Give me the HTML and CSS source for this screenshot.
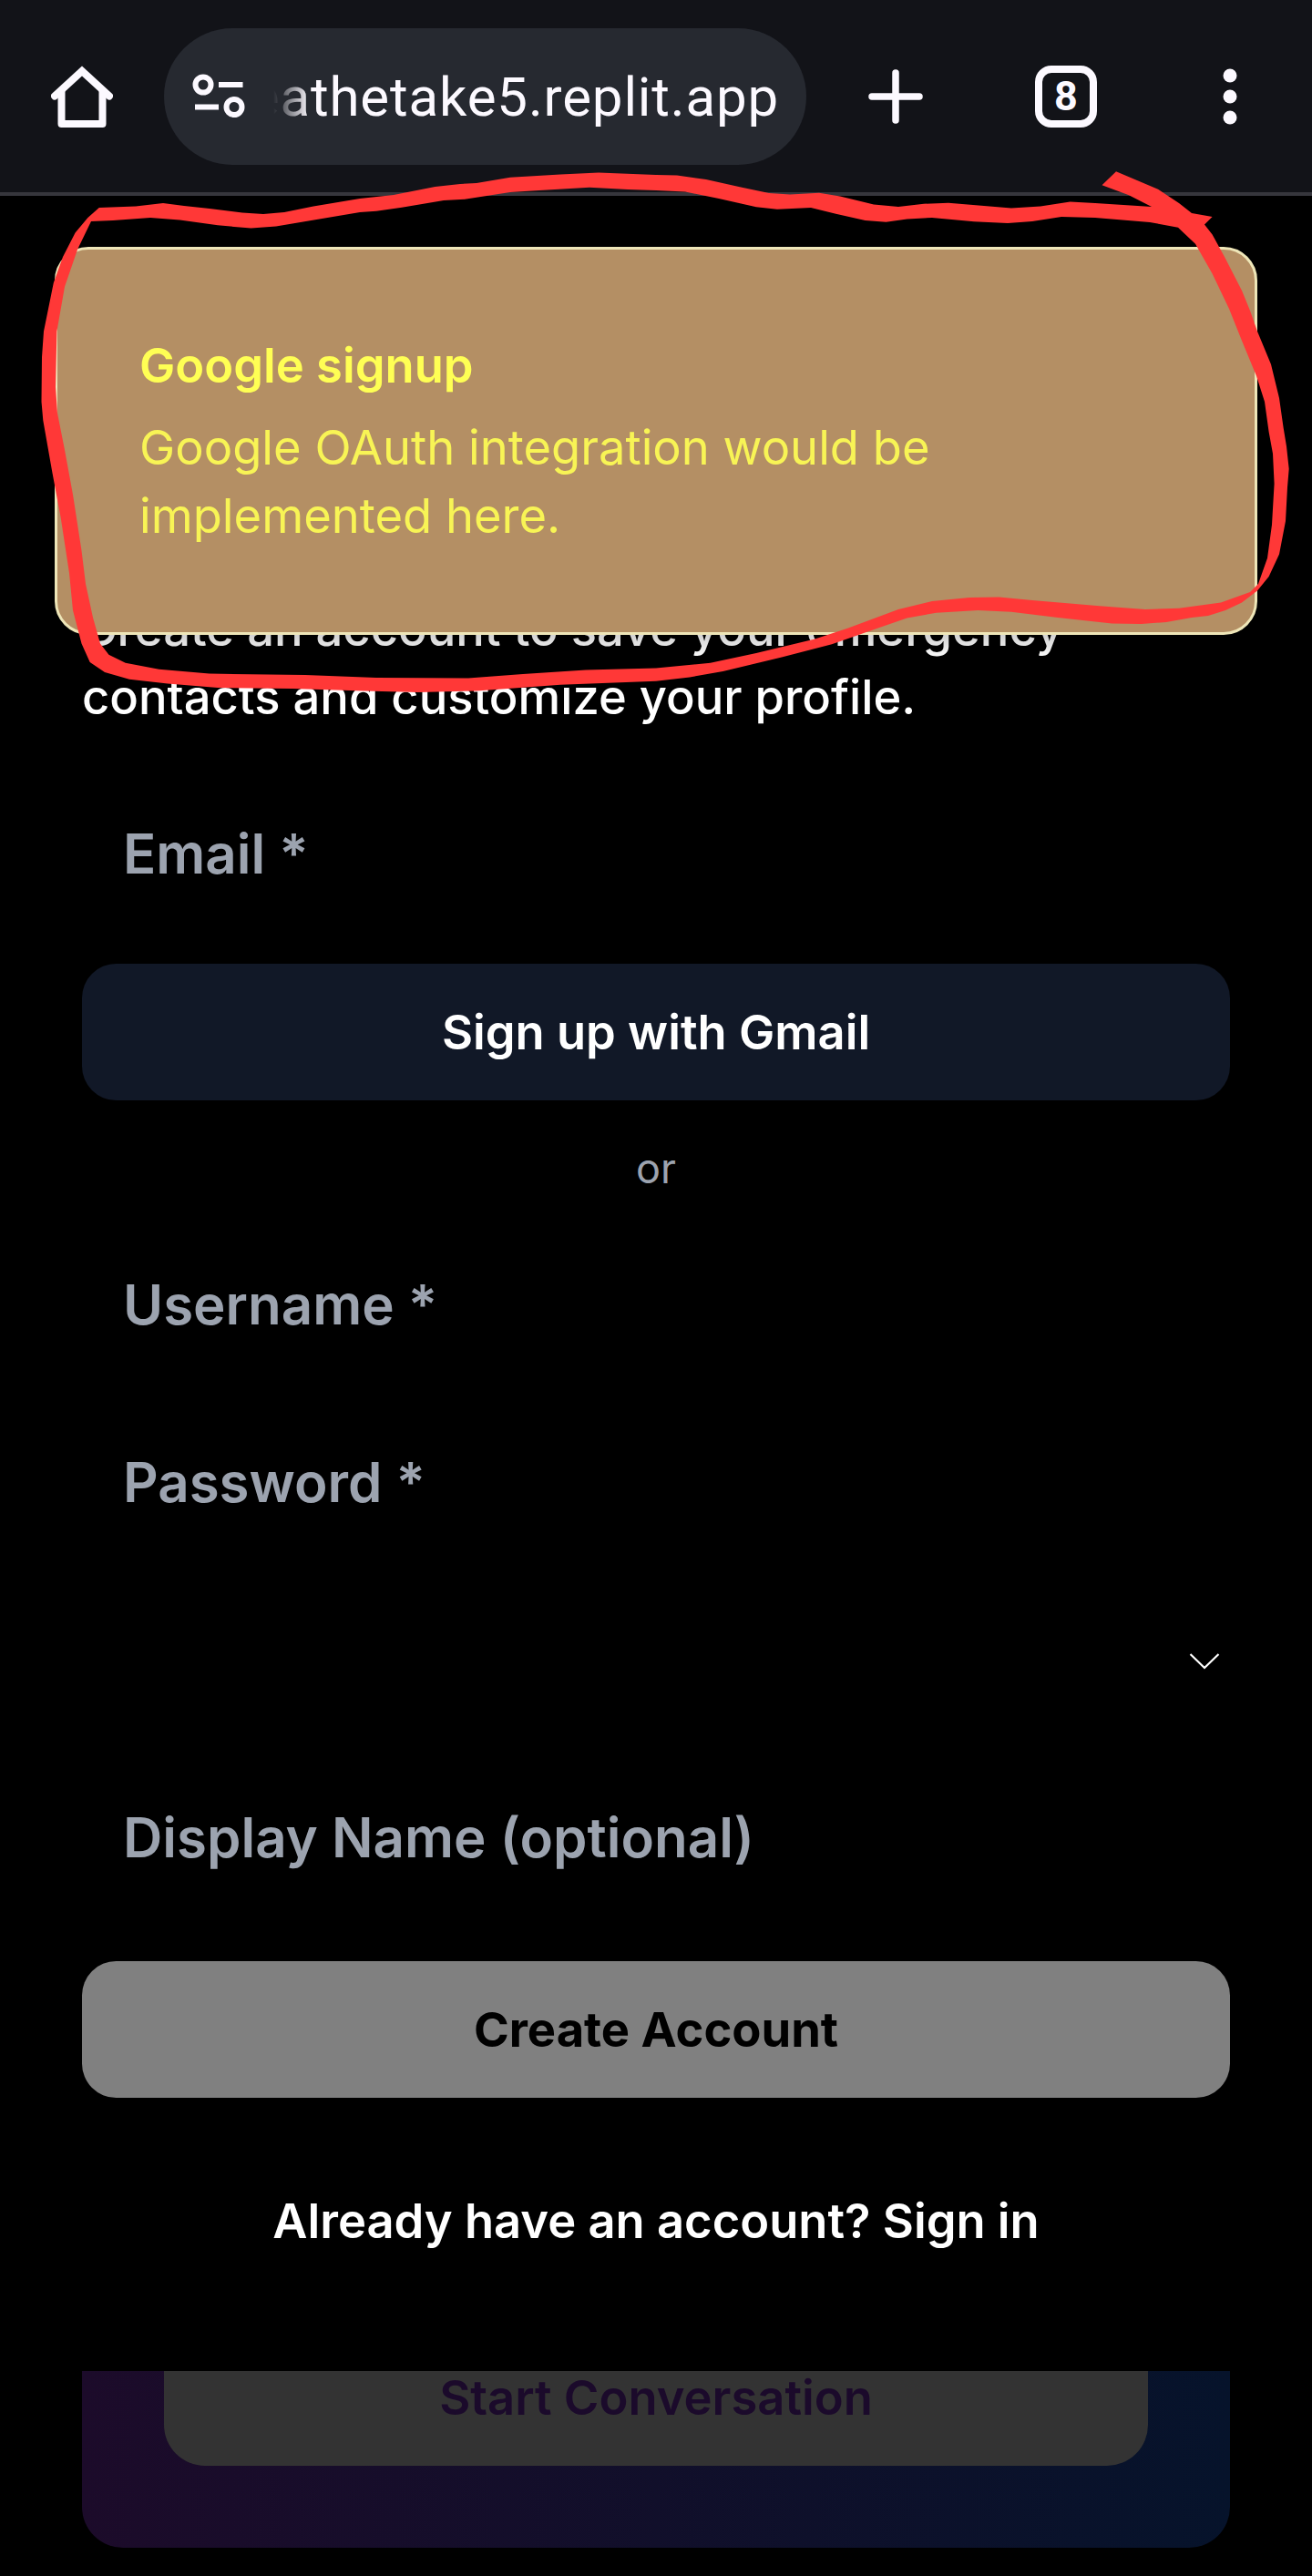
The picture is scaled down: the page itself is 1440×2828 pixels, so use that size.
FILE: index.html
```html
<!DOCTYPE html>
<html lang="en">
<head>
<meta charset="utf-8">
<title>Sign up</title>
<link rel="stylesheet" href="styles.css">
</head>
<body>
<div class="screen">
  <header class="toolbar">
    <svg class="icon-home" viewBox="0 0 68 68" fill="none" stroke="currentColor" stroke-width="8" stroke-linecap="round" stroke-linejoin="round"><path stroke-linejoin="miter" d="M4 33.500 34 6 64 33.500"/><path d="M11.500 28V64H56.500V28"/></svg>
    <div class="omnibox">
      <svg class="icon-tune" viewBox="0 0 58 40" fill="none" stroke="currentColor" stroke-width="6"><circle cx="11" cy="12" r="8.500"/><path d="M28 12H54.500M2 36.500H28"/><circle cx="45" cy="36.500" r="8.500"/></svg>
      <div class="url"><span>eathetake5.replit.app</span></div>
    </div>
    <svg class="icon-plus" viewBox="0 0 60 60" stroke="currentColor" stroke-width="7.500" stroke-linecap="round"><path d="M30 4V56M4 30H56"/></svg>
    <div class="tabs">8</div>
    <svg class="icon-more" viewBox="0 0 16 62" fill="currentColor"><circle cx="8" cy="8" r="7.500"/><circle cx="8" cy="31" r="7.500"/><circle cx="8" cy="54" r="7.500"/></svg>
  </header>

  <main class="form">
    <p class="intro">Create an account to save your emergency contacts and customize your profile.</p>
    <div class="field">Email *</div>
    <button class="btn btn-gmail">Sign up with Gmail</button>
    <div class="divider">or</div>
    <div class="fields">
      <div class="field">Username *</div>
      <div class="field">Password *</div>
      <div class="field select"><svg class="icon-chevron" viewBox="0 0 34 20" fill="none" stroke="currentColor" stroke-width="2.200"><path d="M1.500 2 17 17 32.500 2"/></svg></div>
      <div class="field">Display Name (optional)</div>
    </div>
    <button class="btn btn-create">Create Account</button>
    <button class="btn btn-signin">Already have an account? Sign in</button>
    <section class="card">
      <div class="card-action">Start Conversation</div>
    </section>
  </main>

  <div class="toast">
    <div class="toast-title">Google signup</div>
    <div class="toast-text">Google OAuth integration would be implemented here.</div>
  </div>

  <!-- hand-drawn marker loop around the toast -->
  <svg class="marker" viewBox="0 0 1440 800"><path fill="#ff3837" fill-rule="evenodd" d="M108.800 228L149 226.500L179 223L202 226L230 229L266 233.500L289 235L312 233L344 226.500L395 218L432 214L477.500 205L505 202L523 201L560 194.700L615 191.400L657 189.400L720 192L743 192.600L775 197L812 205.300L844 212L867 213.500L899 211.800L922 215.500L959 224.500L986 227L1014 223.700L1041 222.800L1110 228.600L1142 226.500L1174.500 221.600L1202 223L1264 227L1239 214.300L1209.500 203.300L1225 188.200L1248 198L1271 207.800L1294 223L1308 234L1330.600 238L1322 246.500L1330.600 257.500L1344 282L1363 319L1372 341L1380 363.700L1395 400L1404 437L1408.700 470L1412 490L1414.700 514.700L1413 535L1411 572L1404 608.600L1392.600 633L1380 648.600L1363 661.600L1345 670L1326 676L1308 678L1280 683L1252.600 685L1220.500 684.500L1161 678L1110 671.800L1073.500 670L1027.600 672.700L995.500 678.400L963 689.800L913 707.300L858 721.600L793.500 737L757 743.500L720 747.800L615 751.800L523 758.400L459 760L399.400 758.400L321.400 756L239 755L184 750.600L142 745.700L115 738L98.700 727L89.500 706.500L80 670L76 629L66.600 567.800L57.400 518.800L47.300 461.600L45.500 441L46 392L48 363.700L58.800 310.600L69 282L82.600 255.500L96.400 239ZM100 243L124 242L165 239L197.400 241.600L239 247.300L275.500 250.600L303 248.600L349 240.800L395 233L413 231.800L441 227.800L487 220L510 218.800L560 211L592 209L647 205.700L689 208L720 209L752 210.600L789 218L830 227.300L853 229.800L890 228L917.400 234.700L949.600 242L972.500 243.700L995.500 240.400L1023 239L1069 243.300L1106 245L1133 243L1165 238L1202 239L1262 244L1293 249.800L1312 267.800L1330.600 300.400L1349 339L1363 373.900L1379 412.700L1388 441L1392.600 473.900L1397 498L1398.600 531L1396 576L1391 612.700L1381 641L1372 650L1340 661.600L1294 667.800L1257 669L1206.700 665.300L1133 659L1096.500 655.500L1064 656L1023 660L986 669L931 689.400L894.500 701.600L830 717L779.700 727.800L720 733.500L643 735.500L574 740L514 744.500L413 744L335 741L229.600 739.600L174.500 734.700L137.700 727.800L119.400 718.800L110 706.500L102 678L94 641L89.500 604.500L80 543L71 494L63 453.500L61 425L62.400 363.700L71 314.700L85 274Z"/></svg>
</div>
</body>
</html>
```
FILE: styles.css
```css
* { box-sizing: border-box; }
body { margin: 0; background: #000; font-family: Inter, sans-serif; }
svg { display: block; flex: none; }

.screen {
  position: relative;
  width: 1440px;
  height: 2828px;
  overflow: hidden;
  background: #000;
  color: #fff;
}

/* browser toolbar */
.toolbar {
  display: flex;
  align-items: center;
  height: 215px;
  padding: 0 82px 0 56px;
  background: #121318;
  border-bottom: 4px solid #36363c;
  color: #fcf9ff;
}
.icon-home { width: 68px; height: 68px; }
.omnibox {
  display: flex;
  align-items: center;
  width: 705px;
  height: 150px;
  margin-left: 56px;
  padding: 0 30px 0 32px;
  border-radius: 75px;
  background: #262930;
}
.icon-tune { width: 58px; height: 40px; overflow: visible; margin-top: -9px; }
.url {
  display: flex;
  justify-content: flex-end;
  width: 555px;
  margin: 2px 0 0 30px;
  overflow: hidden;
  font: 400 60px/80px Roboto, sans-serif;
  letter-spacing: -0.150px;
  white-space: nowrap;
  -webkit-mask-image: linear-gradient(90deg, transparent 0, #000 40px);
  mask-image: linear-gradient(90deg, transparent 0, #000 40px);
}
.url { letter-spacing: 0.850px; }
.icon-plus { width: 60px; height: 60px; margin-left: 68px; }
.tabs {
  width: 68px;
  height: 68px;
  margin-left: 123px;
  border: 8px solid currentColor;
  border-radius: 18px;
  font: 700 45px/52px Roboto, sans-serif;
  text-align: center;
}
.icon-more { width: 16px; height: 62px; margin-left: 138px; }

/* sign-up form */
.form {
  display: flex;
  flex-direction: column;
  padding: 438px 90px 0;
}
.intro { margin: 0 0 59px; font-size: 52.5px; line-height: 75px; font-weight: 500; }
.field {
  display: flex;
  align-items: center;
  height: 150px;
  padding: 0 45px;
  color: #9ca3af;
  font-size: 60px;
  font-weight: 600;
}
.fields { display: flex; flex-direction: column; gap: 45px; }
.select { justify-content: flex-end; padding: 3px 11px 0 0; color: #fff; }
.icon-chevron { width: 34px; height: 20px; }
.btn {
  height: 150px;
  padding: 0;
  border: 0;
  border-radius: 37.5px;
  font: 600 52.5px/75px Inter, sans-serif;
}
.btn-gmail { margin-top: 46px; background: #111827; color: #fff; }
.divider {
  margin: 45px 0 44px;
  color: #9ca3af;
  font-size: 45px;
  line-height: 60px;
  text-align: center;
}
.btn-create { margin-top: 61px; background: #808080; color: #000; font-weight: 700; }
.btn-signin { margin-top: 60px; background: transparent; color: #fff; }
.card {
  height: 194px;
  margin-top: 90px;
  padding: 0 90px;
  border-radius: 0 0 45px 45px;
  background: linear-gradient(90deg, #1c0b2a, #06132b);
}
.card-action {
  height: 104px;
  border-radius: 0 0 45px 45px;
  background: #333;
  color: #1b0a2b;
  font-size: 52.5px;
  line-height: 58px;
  font-weight: 600;
  text-align: center;
}

/* notification over the page */
.toast {
  position: absolute;
  top: 271px;
  left: 60px;
  width: 1320px;
  height: 426px;
  padding: 90px 90px 0 90px;
  border: 3px solid #eee6b8;
  border-radius: 37px;
  background: #b48f64;
  color: #ffff54;
  font-size: 52.5px;
  line-height: 75px;
  box-shadow: 0 12px 22px rgba(0, 0, 0, 0.2);
}
.toast-title { font-weight: 600; }
.toast-text { width: 1000px; margin-top: 15px; color: #f8f455; }
.marker { position: absolute; top: 0; left: 0; width: 1440px; height: 800px; }
```
